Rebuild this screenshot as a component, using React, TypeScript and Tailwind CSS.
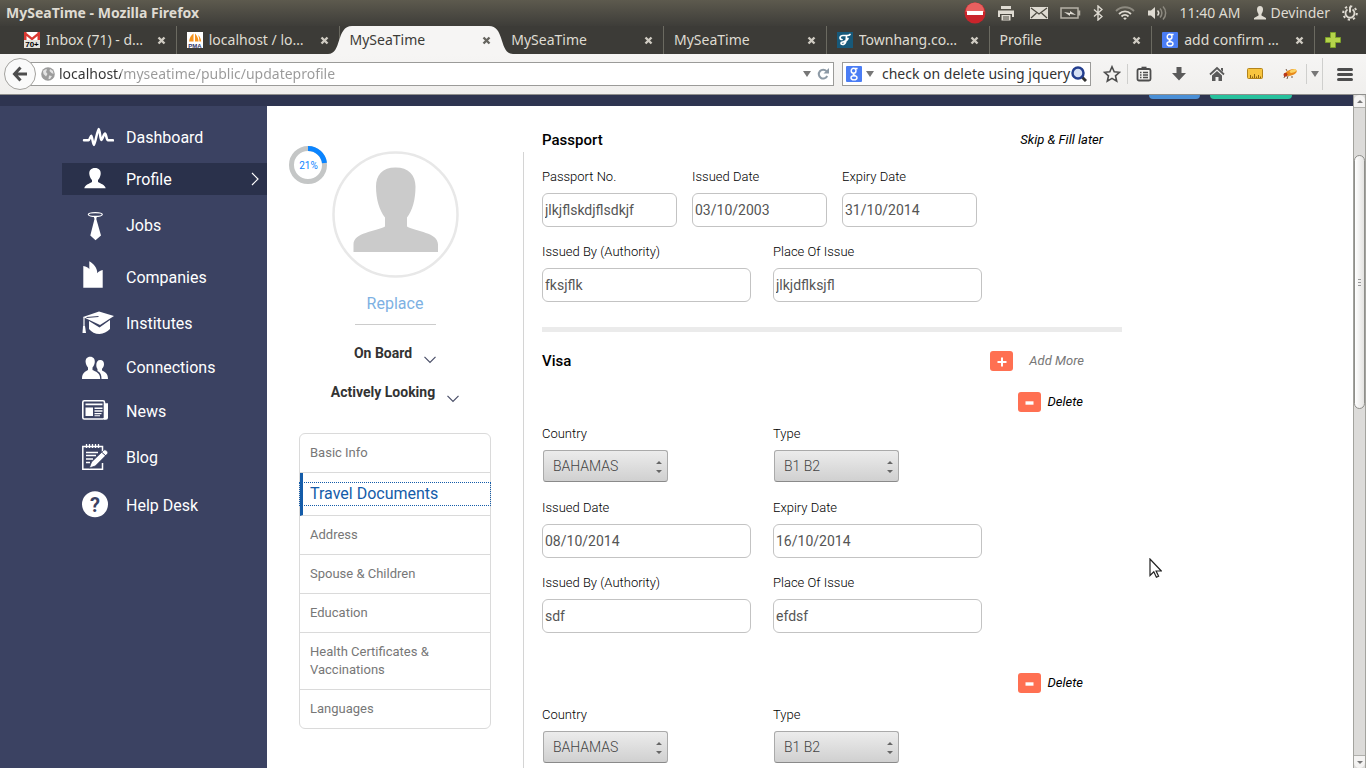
import type { ReactNode } from 'react';
import clsx from 'clsx';

const tabs = [
  { title: 'Inbox (71) - d…', icon: 'mail' },
  { title: 'localhost / lo…', icon: 'pma' },
  { title: 'MySeaTime', active: true },
  { title: 'MySeaTime' },
  { title: 'MySeaTime' },
  { title: 'Townhang.co…', icon: 'townhang' },
  { title: 'Profile' },
  { title: 'add confirm …', icon: 'google' },
];

function GoogleIcon() {
  return (
    <svg viewBox="0 0 16 16" className="h-4 w-4 shrink-0" aria-hidden="true">
      <rect width="16" height="16" rx="1" fill="#4a7df5" />
      <g fill="none" stroke="#fff" strokeWidth="1.4">
        <ellipse cx="7.6" cy="4.8" rx="2.4" ry="2.5" />
        <path d="M9 2.5h2.6M8 7.4c-1.8 1 .2 1.6 1.4 2.2" />
        <ellipse cx="8" cy="11.8" rx="3" ry="2.1" />
      </g>
    </svg>
  );
}

function TabIcon({ name }: { name: string }) {
  if (name === 'google') return <GoogleIcon />;
  if (name === 'mail') {
    return (
      <svg viewBox="0 0 16 16" className="h-4 w-4 shrink-0" aria-hidden="true">
        <rect width="16" height="11" fill="#d93831" />
        <path d="M2.5 0h11v1L8 5.5 2.5 1zM2.5 4L8 8.5 13.5 4v4h-11z" fill="#fff" />
        <rect y="8" width="16" height="8" fill="#e4e2dd" />
        <text x="8" y="15" textAnchor="middle" fontSize="8" fontWeight="bold" fontFamily="Liberation Sans, sans-serif">70+</text>
      </svg>
    );
  }
  if (name === 'pma') {
    return (
      <svg viewBox="0 0 16 16" className="h-4 w-4 shrink-0" aria-hidden="true">
        <rect width="16" height="16" fill="#fff" />
        <path d="M6.5 1.5v8H2C2.5 6 4 3 6.5 1.5zM8 1.5c2 2 3.4 5 3.6 8H8zM11 3c2 1.5 3 4 3.2 6.5h-1.8C12.3 7 12 5 11 3z" fill="#f7941d" />
        <text x="8" y="15.5" textAnchor="middle" fontSize="6" fontWeight="bold" fill="#33366b" fontFamily="Liberation Sans, sans-serif">PMA</text>
      </svg>
    );
  }
  return (
    <svg viewBox="0 0 16 16" className="h-4 w-4 shrink-0" aria-hidden="true">
      <rect width="16" height="16" fill="#17597a" />
      <path d="M5 7.5C2 7.5 2.5 3.5 6 3.5h4c1.500 0 2.500-.3 3-1M9.500 4c0 3-.5 8.500-4 8.500-2 0-2-2.500 0-2.500 2.500 0 4-1 5.500-3.500" fill="none" stroke="#fff" strokeWidth="1.7" strokeLinecap="round" />
    </svg>
  );
}

function Tab({ title, icon, active }: { title: string; icon?: string; active?: boolean }) {
  return (
    <div className={clsx('relative flex min-w-0 flex-1 items-center gap-1.5 px-2.5', active ? 'text-[#3c3b37]' : 'border-r border-[#6b6a61] text-[#dfdbd2]')}>
      {active && (
        <div className="absolute inset-y-0 -left-3 -right-3 flex">
          <svg viewBox="0 0 24 28" className="h-7 w-6 shrink-0" aria-hidden="true">
            <path d="M0 28C14 28 8 0 24 0v28z" fill="#f6f5f4" />
          </svg>
          <div className="flex-1 bg-[#f6f5f4]" />
          <svg viewBox="0 0 24 28" className="h-7 w-6 shrink-0" aria-hidden="true">
            <path d="M24 28C10 28 16 0 0 0v28z" fill="#f6f5f4" />
          </svg>
        </div>
      )}
      {icon && <TabIcon name={icon} />}
      <span className="relative flex-1 overflow-hidden text-sm whitespace-nowrap">{title}</span>
      <button type="button" aria-label={`Close ${title}`} className="relative shrink-0">
        <svg viewBox="0 0 9 9" className="h-[9px] w-[9px]" aria-hidden="true">
          <path d="M1.5 1.5l6 6m0-6l-6 6" stroke={active ? '#66655f' : '#cfcbc2'} strokeWidth="2.4" />
        </svg>
      </button>
    </div>
  );
}

function SystemBar() {
  return (
    <header className="flex h-[26px] shrink-0 items-center bg-linear-to-b from-[#5d5a4e] to-[#3e3d39] pr-2 pl-1.5 text-[#dfdbd2]">
      <h1 className="flex-1 text-sm font-bold">MySeaTime - Mozilla Firefox</h1>
      <div className="flex items-center text-sm">
        <svg viewBox="0 0 22 22" className="h-[22px] w-[22px]" aria-hidden="true">
          <circle cx="11" cy="11" r="10.5" fill="#c9242b" />
          <path d="M1.5 10a9.5 9.5 0 0 1 19 0z" fill="#e8605f" />
          <rect x="3" y="9" width="16" height="4" fill="#fff" />
        </svg>
        <svg viewBox="0 0 16 16" className="ml-3 h-4 w-4" fill="#dfdbd2" aria-hidden="true">
          <path d="M3 1h10v3H3zM0 5.5h16V12h-2V9H2v3H0zM3.5 10h9v5.5h-9z" />
          <path d="M5 12h6M5 14h6" stroke="#4b4940" />
        </svg>
        <svg viewBox="0 0 18 12" className="ml-4 h-3 w-[18px]" aria-hidden="true">
          <rect width="18" height="12" fill="#dfdbd2" />
          <path d="M1 1l8 6 8-6M1 11l5.5-5M17 11l-5.5-5" fill="none" stroke="#4b4940" strokeWidth="1.2" />
        </svg>
        <svg viewBox="0 0 21 12" className="ml-3 h-3 w-[21px]" aria-hidden="true">
          <path d="M1 1h17v10H1zM19.5 3.5v5" fill="none" stroke="#b5b1a6" strokeWidth="1.5" />
          <path d="M4 5l6 1V4l6 4-6-1v2z" fill="#dfdbd2" />
        </svg>
        <svg viewBox="0 0 10 16" className="ml-3 h-4 w-2.5" fill="none" stroke="#dfdbd2" strokeWidth="1.4" aria-hidden="true">
          <path d="M1 4.5l8 7L5 15V1l4 3.5-8 7" />
        </svg>
        <svg viewBox="0 0 20 16" className="ml-3 h-4 w-5" fill="none" strokeWidth="1.8" aria-hidden="true">
          <path d="M1 6c5-5 13-5 18 0" stroke="#8d8a80" />
          <path d="M4 9c3.5-3.5 8.5-3.5 12 0M6.5 11.5c2-2 5-2 7 0" stroke="#dfdbd2" />
          <path d="M8.2 13.2L10 15l1.8-1.8c-1-.9-2.600-.9-3.600 0z" fill="#dfdbd2" />
        </svg>
        <svg viewBox="0 0 20 16" className="ml-3 h-4 w-5" aria-hidden="true">
          <path d="M1 5.5h3L8 2v12l-4-3.5H1z" fill="#dfdbd2" />
          <path d="M10.5 5.5c1.5 1.5 1.5 3.5 0 5" fill="none" stroke="#dfdbd2" strokeWidth="1.5" />
          <path d="M13 3.5c2.5 2.5 2.5 6.5 0 9M16 1.5c3.5 3.5 3.5 9.5 0 13" fill="none" stroke="#8d8a80" strokeWidth="1.5" />
        </svg>
        <span className="ml-3">11:40 AM</span>
        <svg viewBox="0 0 14 14" className="ml-3 h-3.5 w-3.5" fill="#dfdbd2" aria-hidden="true">
          <path d="M7 0c2 0 3 1.5 3 3.5S9 7 8.5 8v1.5L13 12v1.5H1V12l4.5-2.5V8C5 7 4 5.5 4 3.5S5 0 7 0z" />
        </svg>
        <span className="ml-1">Devinder</span>
        <svg viewBox="0 0 16 16" className="ml-3 h-4 w-4" fill="none" stroke="#dfdbd2" aria-hidden="true">
          <circle cx="8" cy="8" r="6.8" strokeWidth="2" strokeDasharray="2.3 3" />
          <path d="M5.5 4.5a4.5 4.5 0 1 0 5 0" strokeWidth="1.8" />
          <path d="M8 1.5v6" strokeWidth="2" />
        </svg>
      </div>
    </header>
  );
}

function ToolButton({ label, children }: { label: string; children: ReactNode }) {
  return (
    <button type="button" aria-label={label} className="flex h-7 w-[38px] items-center justify-center">
      {children}
    </button>
  );
}

function Toolbar() {
  return (
    <div className="flex h-[41px] shrink-0 items-center border-b border-[#8f8f8d] bg-linear-to-b from-[#f6f5f4] to-[#f0efed] text-sm">
      <button type="button" aria-label="Back" className="z-10 ml-1 flex h-8 w-8 shrink-0 items-center justify-center rounded-full border border-[#a3a29e] bg-[#fafafa]">
        <svg viewBox="0 0 16 16" className="h-4 w-4" fill="none" stroke="#4d4d4d" strokeWidth="3" aria-hidden="true">
          <path d="M8.5 1.5L2.5 8l6 6.5M3 8h12" />
        </svg>
      </button>
      <div className="-ml-1.5 flex h-6 min-w-0 flex-1 items-center border border-[#9b9b99] bg-white pr-1 pl-2.5">
        <svg viewBox="0 0 14 14" className="h-3.5 w-3.5 shrink-0" aria-hidden="true">
          <circle cx="7" cy="7" r="6.8" fill="#9c9c9c" />
          <path d="M2 4c1.5-1.5 3-2 4-1.5L5 5l1.5 2L5 9.5 2.5 7zM9 2l3 2 .5 3-2-1L8.5 4zM8 8.5l3 .5-2 3H7.5z" fill="#e3e3e3" />
        </svg>
        <input
          aria-label="Address"
          defaultValue="localhost/myseatime/public/updateprofile"
          className="ml-1 min-w-0 flex-1 bg-linear-to-r from-[#333333] from-[62px] to-[#999999] to-[62px] bg-clip-text text-transparent outline-none"
        />
        <button type="button" aria-label="History">
          <svg viewBox="0 0 8 6" className="h-1.5 w-2" aria-hidden="true"><path d="M0 0h8L4 6z" fill="#777" /></svg>
        </button>
        <button type="button" aria-label="Reload" className="ml-1.5">
          <svg viewBox="0 0 12 12" className="h-3 w-3" aria-hidden="true">
            <path d="M9.5 3.2A4.4 4.4 0 1 0 10.2 8" fill="none" stroke="#8d9aa6" strokeWidth="2" />
            <path d="M12 0v5.5H6.5z" fill="#8d9aa6" />
          </svg>
        </button>
      </div>
      <div className="ml-2 flex h-6 w-[249px] shrink-0 items-center border border-[#9b9b99] bg-white px-[3px]">
        <GoogleIcon />
        <svg viewBox="0 0 8 6" className="ml-1 h-1.5 w-2 shrink-0" aria-hidden="true"><path d="M0 0h8L4 6z" fill="#777" /></svg>
        <input aria-label="Search" defaultValue="check on delete using jquery" className="ml-2 min-w-0 flex-1 text-[#333333] outline-none" />
        <button type="button" aria-label="Search the web">
          <svg viewBox="0 0 16 16" className="h-4 w-4" fill="none" aria-hidden="true">
            <path d="M11 11l4 4" stroke="#333" strokeWidth="3" />
            <circle cx="7" cy="7" r="5.5" fill="#d5e0f4" stroke="#243f8f" strokeWidth="2.5" />
          </svg>
        </button>
      </div>
      <div className="ml-0.5 flex shrink-0 items-center">
        <ToolButton label="Bookmark">
          <svg viewBox="0 0 18 18" className="h-[18px] w-[18px]" fill="none" stroke="#4d4d4d" strokeWidth="1.6" aria-hidden="true">
            <path d="M9 1.8l2.2 5 5.3.5-4 3.6 1.2 5.3L9 13.4l-4.7 2.8 1.2-5.3-4-3.6 5.3-.5z" />
          </svg>
        </ToolButton>
        <div className="-ml-1 h-5 w-px bg-[#cfcfcd]" />
        <button type="button" aria-label="Bookmarks list" className="flex h-7 w-8 items-center justify-center">
          <svg viewBox="0 0 16 16" className="h-4 w-4" fill="none" stroke="#4d4d4d" aria-hidden="true">
            <rect x="1.5" y="3" width="13" height="11.5" rx="1.5" strokeWidth="1.8" />
            <path d="M5.5 2h5" strokeWidth="2.6" />
            <path d="M4 6.5h1.5m1.500 0h5M4 9h1.5m1.500 0h5M4 11.5h1.5m1.500 0h5" strokeWidth="1.4" />
          </svg>
        </button>
        <ToolButton label="Downloads">
          <svg viewBox="0 0 16 16" className="h-4 w-4" fill="#5a5a5a" aria-hidden="true"><path d="M5.5 1h5v6H15l-7 7.5L1 7h4.5z" /></svg>
        </ToolButton>
        <ToolButton label="Home">
          <svg viewBox="0 0 16 16" className="h-4 w-4" aria-hidden="true">
            <path d="M1 8.5l7-6.5 7 6.5" fill="none" stroke="#5a5a5a" strokeWidth="1.8" />
            <path d="M8 5l5 4.5V15H9.5v-4h-3v4H3V9.5zM12 2h2v4l-2-2z" fill="#5a5a5a" />
          </svg>
        </ToolButton>
        <ToolButton label="Ruler">
          <svg viewBox="0 0 16 14" className="h-3.5 w-4" aria-hidden="true">
            <rect x=".5" y="1.5" width="15" height="10" rx="1" fill="#f8c53f" stroke="#b3841c" />
            <path d="M3.5 11V8m2 3V9.5m2 1.5V7m2 4V9.5m2 1.5V8m2 3V9.5" stroke="#8a6212" />
          </svg>
        </ToolButton>
        <button type="button" aria-label="Firebug" className="flex h-7 w-8 items-center justify-center">
          <svg viewBox="0 0 16 14" className="h-3.5 w-4" aria-hidden="true">
            <path d="M3 8l-1 3m4-2l-1 3m5-3v2M5 4L4 2" stroke="#54341b" strokeWidth=".8" />
            <ellipse cx="9" cy="5.5" rx="6" ry="3" transform="rotate(-18 9 5.5)" fill="#e88a1c" />
            <ellipse cx="11" cy="4" rx="3.5" ry="1.500" transform="rotate(-18 11 4)" fill="#fbd262" />
            <circle cx="3.5" cy="7.8" r="2" fill="#b9371a" />
          </svg>
        </button>
        <div className="h-5 w-px bg-[#cfcfcd]" />
        <button type="button" aria-label="Firebug menu" className="flex h-8 w-4 items-center justify-center border-r border-[#cfcfcd]">
          <svg viewBox="0 0 8 6" className="h-1.5 w-2" aria-hidden="true"><path d="M0 0h8L4 6z" fill="#777" /></svg>
        </button>
        <button type="button" aria-label="Menu" className="mr-[13px] ml-3.5 flex h-[13px] w-4 flex-col justify-between">
          <span className="h-[3px] w-full rounded-sm bg-[#4d4d4d]" />
          <span className="h-[3px] w-full rounded-sm bg-[#4d4d4d]" />
          <span className="h-[3px] w-full rounded-sm bg-[#4d4d4d]" />
        </button>
      </div>
    </div>
  );
}

const navItems = [
  {
    label: 'Dashboard',
    space: '',
    icon: <path d="M2 19.3h4.5c1 0 2-4.5 2.800-4.5S11 24 12 24 15.500 8 16.700 8s1.500 11 2.600 11 2.500-6.500 3.700-6.500 1.500 6.800 3 6.800h5" fill="none" stroke="#fff" strokeWidth="2.5" strokeLinecap="round" />,
  },
  {
    label: 'Profile',
    space: 'mt-2.5',
    active: true,
    icon: <path d="M13 5c4 0 6 2.5 5.700 6-.2 2.500-1.500 5-2.700 6v2c2 1.500 7 2.500 7.700 6.300H2.300C3 21.500 8 20.500 10 19v-2c-1.200-1-2.500-3.500-2.700-6C7 7.500 9 5 13 5z" />,
  },
  {
    label: 'Jobs',
    space: 'mt-3.5',
    icon: (
      <>
        <ellipse cx="13.3" cy="5.5" rx="7" ry="1.9" fill="none" stroke="#fff" strokeWidth="1.2" />
        <path d="M11.5 7h3.6l-.8 3L19 26.500l-5.500 4.800-5.200-4.800L12.500 10z" />
      </>
    ),
  },
  {
    label: 'Companies',
    space: 'mt-5',
    icon: <path d="M1.3 26.700V5c3 .5 5 1.500 6 3.300V.3c4.500 2.500 8 6.500 8 12 1.200-1.800 3-2.800 5.400-3.300v17.700z" />,
  },
  {
    label: 'Institutes',
    space: 'mt-3.5',
    icon: (
      <>
        <path d="M1 10l16-5.500L32 9l-14 9z" />
        <path d="M7 14l10.5 6.500L28 13v9c-3 3-6.500 4.800-10.500 5C13 27 9.500 25 7 22z" />
        <path d="M2 10v9" fill="none" stroke="#fff" strokeWidth="1.2" />
        <path d="M1 19h2l1 7H.5z" />
        <path d="M4.5 10.500l12-1" stroke="#3b4262" />
      </>
    ),
  },
  {
    label: 'Connections',
    space: 'mt-3',
    icon: (
      <>
        <path d="M18.2 9c2.700 0 4 2 3.800 4.500-.2 2-1 3.500-2 4.200v1.800c2.500 1.200 6 2.500 6 8.500h-6.500c0-4-1-6.500-4-8v-2c-.8-.8-1.200-2.200-1.200-4 0-3 1.300-5 3.900-5z" />
        <path d="M8.200 5.700c3.300 0 4.800 2.300 4.600 5.300-.2 2.500-1.300 4.500-2.300 5.500v2.500c3 1.500 7.700 2.500 7.700 9H0c0-6.500 3.500-7.500 6-9v-2.500C5 15.500 3.800 13.500 3.600 11c-.2-3 1.300-5.300 4.600-5.300z" />
      </>
    ),
  },
  {
    label: 'News',
    space: 'mt-3',
    icon: (
      <>
        <path d="M22.5 8.300H26v14.500a2 2 0 0 1-2 2h-2z" />
        <rect x=".8" y="5.8" width="21.700" height="18.200" rx="1.5" fill="none" stroke="#fff" strokeWidth="1.6" />
        <path d="M3.500 8.500h17v1.800h-17zM3.500 12.500h7.500V21H3.500zM12.500 12.500h8V14h-8zM12.500 15.300h8v1.400h-8zM12.500 18h7v1.200h-7zM12.500 20.200h5.500v1h-5.500z" />
      </>
    ),
  },
  {
    label: 'Blog',
    space: 'mt-3.5',
    icon: (
      <>
        <path d="M20.5 16V5.500H.8v22.700h19.700V22" fill="none" stroke="#fff" strokeWidth="1.5" />
        <path d="M4.500 3v4m3-4v4m3-4v4m3-4v4m3-4v4M4 11.500h12M4 14.500h10M4 18h7M4 21.500h4" stroke="#fff" strokeWidth="1.3" />
        <path d="M21.500 9.500c1-1 2-.8 3.200.3s1.600 2.200.6 3.200l-12 12-6 2 2.200-6z" stroke="#3b4262" strokeWidth=".8" />
        <path d="M19.500 11l5 4.500" stroke="#3b4262" />
      </>
    ),
  },
  {
    label: 'Help Desk',
    space: 'mt-4',
    icon: (
      <>
        <circle cx="13" cy="15.3" r="13" />
        <text x="13" y="22.5" textAnchor="middle" fontSize="20" fontWeight="bold" fill="#3b4262" fontFamily="Roboto, sans-serif">?</text>
      </>
    ),
  },
];

function Sidebar() {
  return (
    <nav className="w-[267px] shrink-0 bg-[#3b4262] pt-[15px] pl-[62px]">
      <ul>
        {navItems.map((item) => (
          <li key={item.label} className={item.space}>
            <a href="#" className={clsx('flex h-8 items-center gap-3 pr-2 pl-5 text-base text-white', item.active && 'bg-[#2a314b]')}>
              <svg viewBox="0 0 32 32" className="h-8 w-8 shrink-0" fill="#fff" aria-hidden="true">{item.icon}</svg>
              <span className="flex-1 pt-0.5">{item.label}</span>
              {item.active && (
                <svg viewBox="0 0 8 14" className="h-3.5 w-2" fill="none" stroke="#fff" strokeWidth="1.2" aria-hidden="true">
                  <path d="M1 1l6 6-6 6" />
                </svg>
              )}
            </a>
          </li>
        ))}
      </ul>
    </nav>
  );
}

const sections = ['Basic Info', 'Travel Documents', 'Address', 'Spouse & Children', 'Education', 'Health Certificates & Vaccinations', 'Languages'];

function StatusButton({ children }: { children: ReactNode }) {
  return (
    <button type="button" className="flex items-center gap-3 text-sm leading-5 font-bold text-[#333333]">
      {children}
      <svg viewBox="0 0 12 8" className="mt-3.5 h-2 w-3" fill="none" stroke="#4a4f68" strokeWidth="1.2" aria-hidden="true">
        <path d="M.5 .8L6 6.500 11.500 .8" />
      </svg>
    </button>
  );
}

function ProfilePanel() {
  return (
    <aside className="relative flex w-64 shrink-0 flex-col items-center pt-[45px]">
      <svg viewBox="0 0 38 38" className="absolute top-10 left-[22px] h-[38px] w-[38px]" aria-hidden="true">
        <circle cx="19" cy="19" r="16.5" fill="none" stroke="#c4c6c6" strokeWidth="5" />
        <path d="M19 2.500A16.500 16.500 0 0 1 35.500 17" fill="none" stroke="#0a84ff" strokeWidth="5" />
        <text x="19.5" y="22.5" textAnchor="middle" fontSize="10" fill="#0a84ff">21%</text>
      </svg>
      <svg viewBox="0 0 127 127" className="h-[127px] w-[127px]" role="img" aria-label="Profile photo">
        <circle cx="63.5" cy="63.5" r="62" fill="none" stroke="#e8e8e8" strokeWidth="2.5" />
        <path d="M63.500 16.500c13 0 20 7.500 20 19 0 13-3 24-8.500 31v9c9 5 31 6 31 18v7.500H21.500V93.500c0-12 22-13 31.500-18v-9C47.500 59.500 44 48.500 44 35.500c0-11.500 6.500-19 19.500-19z" fill="#cbcbcb" />
      </svg>
      <a href="#" className="mt-3.5 w-[81px] border-b border-[#cccccc] pb-2 text-center text-base text-[#7db1e3]">Replace</a>
      <div className="mt-[17px] flex flex-col items-center gap-[17px]">
        <StatusButton>On Board</StatusButton>
        <StatusButton>Actively Looking</StatusButton>
      </div>
      <ul className="mt-[30px] w-48 rounded-md border border-[#dadada] text-[13px] leading-[18px] text-[#777777]">
        {sections.map((name) => {
          const current = name === 'Travel Documents';
          return (
            <li key={name} className={clsx('border-b border-[#dadada] py-2.5 last:border-b-0', current && 'border-l-[3px] border-l-[#145ca9]')}>
              <a
                href="#"
                className={clsx('block', current ? '-ml-[3px] pl-2.5 text-base leading-[22px] text-[#145ca9] outline-1 outline-[#145ca9] outline-dotted' : 'px-2.5')}
              >
                {name}
              </a>
            </li>
          );
        })}
      </ul>
    </aside>
  );
}

function Field({ id, label, value, size = 'lg' }: { id: string; label: string; value: string; size?: 'sm' | 'lg' }) {
  return (
    <div className={clsx('flex flex-col gap-[7px]', size === 'sm' ? 'w-[135px]' : 'w-[209px]')}>
      <label htmlFor={id} className="text-[13px] leading-[18px] font-light text-black">{label}</label>
      <input id={id} defaultValue={value} className="h-[34px] w-full rounded-md border border-[#c3c3c3] px-0.5 text-sm text-[#555555]" />
    </div>
  );
}

function SelectField({ id, label, value }: { id: string; label: string; value: string }) {
  return (
    <div className="flex w-[209px] flex-col gap-[7px]">
      <label htmlFor={id} className="text-[13px] leading-[18px] font-light text-black">{label}</label>
      <div className="relative m-px mt-0 w-[125px]">
        <select
          id={id}
          defaultValue={value}
          className="block h-8 w-full appearance-none rounded-[3px] border border-[#aaaaaa] border-b-[#8a8a8a] bg-linear-to-b from-[#ececec] to-[#d0d0d0] px-[9px] text-sm font-light text-[#444444]"
        >
          <option>{value}</option>
        </select>
        <svg viewBox="0 0 6 12" className="pointer-events-none absolute top-[11px] right-1.5 h-3 w-1.5" fill="#666" aria-hidden="true">
          <path d="M0 3h6L3 0zM0 9h6l-3 3z" />
        </svg>
      </div>
    </div>
  );
}

function SignBadge({ minus }: { minus?: boolean }) {
  return (
    <span className="flex h-5 w-[23px] items-center justify-center rounded-[3px] bg-[#ff7052]">
      <svg viewBox="0 0 10 10" className="mt-0.5 h-2.5 w-2.5" stroke="#fff" aria-hidden="true">
        {minus ? <path d="M.5 5h8" strokeWidth="3.4" /> : <path d="M.5 5h9M5 .5v9" strokeWidth="2" />}
      </svg>
    </span>
  );
}

function DeleteButton() {
  return (
    <button type="button" className="mr-[39px] flex items-center gap-1.5 self-end text-[13px] leading-5 text-black italic">
      <SignBadge minus />
      Delete
    </button>
  );
}

function TravelForm() {
  return (
    <form className="flex w-[580px] flex-col pt-6">
      <div className="flex items-center justify-between pr-[19px] leading-5">
        <h2 className="text-[15px] font-medium text-black">Passport</h2>
        <a href="#" className="text-[13px] text-black italic">Skip &amp; Fill later</a>
      </div>
      <div className="mt-[18px] flex flex-col gap-4">
        <div className="flex gap-[15px]">
          <Field id="passport-no" label="Passport No." value="jlkjflskdjflsdkjf" size="sm" />
          <Field id="passport-issued" label="Issued Date" value="03/10/2003" size="sm" />
          <Field id="passport-expiry" label="Expiry Date" value="31/10/2014" size="sm" />
        </div>
        <div className="flex gap-[22px]">
          <Field id="passport-authority" label="Issued By (Authority)" value="fksjflk" />
          <Field id="passport-place" label="Place Of Issue" value="jlkjdflksjfl" />
        </div>
      </div>
      <hr className="mt-[25px] border-t-[5px] border-[#ebebeb]" />
      <div className="mt-[19px] flex items-center justify-between pr-[38px] leading-5">
        <h2 className="text-[15px] font-medium text-black">Visa</h2>
        <button type="button" className="flex items-center gap-4 text-[13px] text-[#777777] italic">
          <SignBadge />
          Add More
        </button>
      </div>
      <div className="mt-[21px] flex flex-col">
        <DeleteButton />
        <div className="mt-[13px] flex flex-col gap-4">
          <div className="flex gap-[22px]">
            <SelectField id="visa1-country" label="Country" value="BAHAMAS" />
            <SelectField id="visa1-type" label="Type" value="B1 B2" />
          </div>
          <div className="flex gap-[22px]">
            <Field id="visa1-issued" label="Issued Date" value="08/10/2014" />
            <Field id="visa1-expiry" label="Expiry Date" value="16/10/2014" />
          </div>
          <div className="flex gap-[22px]">
            <Field id="visa1-authority" label="Issued By (Authority)" value="sdf" />
            <Field id="visa1-place" label="Place Of Issue" value="efdsf" />
          </div>
        </div>
      </div>
      <div className="mt-10 flex flex-col">
        <DeleteButton />
        <div className="mt-[13px] flex gap-[22px]">
          <SelectField id="visa2-country" label="Country" value="BAHAMAS" />
          <SelectField id="visa2-type" label="Type" value="B1 B2" />
        </div>
      </div>
    </form>
  );
}

function Scrollbar() {
  return (
    <div className="flex w-[13px] shrink-0 flex-col border-x border-[#a3a39e] bg-[#dcdbd9]">
      <div className="flex h-[13px] items-center justify-center rounded-t-full border-b border-[#b0b0ac] bg-[#f4f3f2]">
        <svg viewBox="0 0 6 3" className="h-[3px] w-1.5" aria-hidden="true"><path d="M0 3h6L3 0z" fill="#777" /></svg>
      </div>
      <div className="flex-1">
        <div className="mt-[47px] flex h-[254px] flex-col items-center justify-center gap-0.5 rounded-full border border-[#8f8f8b] bg-linear-to-r from-white to-[#e4e3e1]">
          <span className="h-px w-[3px] bg-[#999999]" />
          <span className="h-px w-[3px] bg-[#999999]" />
          <span className="h-px w-[3px] bg-[#999999]" />
        </div>
      </div>
      <div className="flex h-[13px] items-center justify-center rounded-b-full border-t border-[#b0b0ac] bg-[#f4f3f2]">
        <svg viewBox="0 0 6 3" className="h-[3px] w-1.5" aria-hidden="true"><path d="M0 0h6L3 3z" fill="#777" /></svg>
      </div>
    </div>
  );
}

export default function App() {
  return (
    <div className="relative flex h-screen flex-col overflow-hidden bg-white font-['Noto_Sans',sans-serif]">
      <SystemBar />
      <div className="flex h-7 shrink-0 bg-[#3c3b37] pl-3.5">
        {tabs.map((tab, i) => (
          <Tab key={i} {...tab} />
        ))}
        <button type="button" aria-label="New tab" className="w-[51px] pl-2.5">
          <svg viewBox="0 0 16 16" className="h-4 w-4" aria-hidden="true">
            <path d="M5.5 .5h5v5h5v5h-5v5h-5v-5h-5v-5h5z" fill="#b5d34b" stroke="#7da02a" />
          </svg>
        </button>
      </div>
      <Toolbar />
      <div className="flex min-h-0 flex-1 font-['Roboto',sans-serif]">
        <div className="flex min-w-0 flex-1 flex-col overflow-hidden">
          <div className="flex h-[11px] shrink-0 items-start justify-end gap-2.5 bg-[#2e3450] pr-[61px]">
            <span className="h-1 w-[51px] rounded-b bg-[#4a8fd6]" />
            <span className="h-1 w-[82px] rounded-b bg-[#27c19d]" />
          </div>
          <div className="flex min-h-0 flex-1">
            <Sidebar />
            <ProfilePanel />
            <main className="flex min-w-0 flex-1">
              <div className="mt-[46px] mr-[18px] w-px bg-[#d4d4d4]" />
              <TravelForm />
            </main>
          </div>
        </div>
        <Scrollbar />
      </div>
      <svg viewBox="0 0 13 20" className="pointer-events-none absolute top-[558px] left-[1149px] h-5 w-[13px]" aria-hidden="true">
        <path d="M1 1v16.500l3.800-3.700 2.600 5.400 2.200-1-2.500-5.200h5.200z" fill="#fff" stroke="#222" strokeWidth="1.2" />
      </svg>
    </div>
  );
}
